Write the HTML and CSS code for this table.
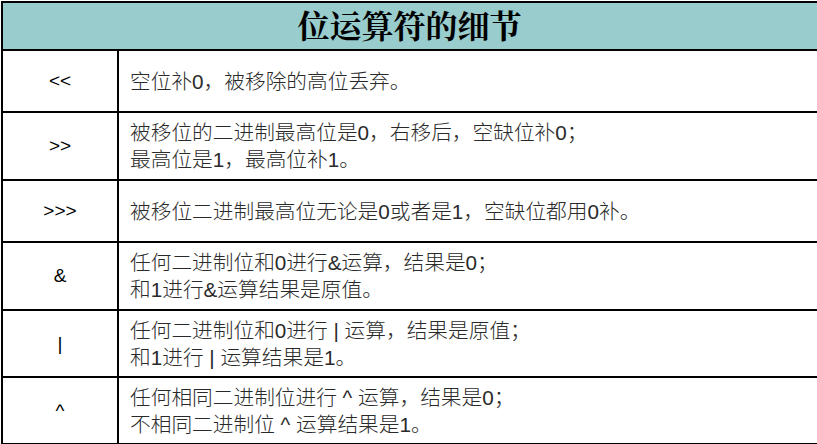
FILE: index.html
```html
<!DOCTYPE html>
<html lang="zh-CN">
<head>
<meta charset="utf-8">
<link rel="stylesheet" href="styles.css">
</head>
<body>
<table class="ops">
  <colgroup><col class="c-op"><col class="c-desc"></colgroup>
  <tr class="head"><th colspan="2">位运算符的细节</th></tr>
  <tr class="r1"><td class="op">&lt;&lt;</td><td class="desc">空位补0，被移除的高位丢弃。</td></tr>
  <tr class="r2"><td class="op">&gt;&gt;</td><td class="desc">被移位的二进制最高位是0，右移后，空缺位补0；<br>最高位是1，最高位补1。</td></tr>
  <tr class="r1"><td class="op">&gt;&gt;&gt;</td><td class="desc">被移位二进制最高位无论是0或者是1，空缺位都用0补。</td></tr>
  <tr class="r2"><td class="op">&amp;</td><td class="desc">任何二进制位和0进行&amp;运算，结果是0；<br>和1进行&amp;运算结果是原值。</td></tr>
  <tr class="r3"><td class="op">|</td><td class="desc">任何二进制位和0进行 | 运算，结果是原值；<br>和1进行 | 运算结果是1。</td></tr>
  <tr class="r3"><td class="op">^</td><td class="desc">任何相同二进制位进行 ^ 运算，结果是0；<br>不相同二进制位 ^ 运算结果是1。</td></tr>
</table>
</body>
</html>
```
FILE: styles.css
```css
html, body {
  margin: 0;
  padding: 0;
  background: #ffffff;
}
.ops {
  border-collapse: collapse;
  width: 820px;
  margin: 1px 0 0 1px;
  table-layout: fixed;
}
.c-op { width: 116px; }
.c-desc { width: 704px; }
.ops th, .ops td {
  border: 2px solid #000;
  padding: 0;
}
.ops .head th {
  height: 46px;
  background: #99cccc;
  font-family: "Noto Serif CJK SC", "Noto Sans CJK SC", serif;
  font-weight: bold;
  font-size: 32px;
  line-height: 42px;
  vertical-align: top;
  color: #000;
  text-align: center;
  border-right: none;
  padding: 0 6px 0 0;
}
.op {
  text-align: center;
  font-family: "Liberation Sans", Arial, sans-serif;
  font-size: 19px;
  color: #000;
}
.ops .desc {
  padding-left: 11px;
  font-family: "Liberation Sans", "Noto Sans CJK SC", sans-serif;
  font-weight: 300;
  font-size: 20.7px;
  line-height: 27px;
  color: #2a2a2a;
  border-right: none;
  white-space: nowrap;
}
.r1 td { height: 60px; }
.r2 td { height: 66px; }
.r3 td { height: 65px; }
```
